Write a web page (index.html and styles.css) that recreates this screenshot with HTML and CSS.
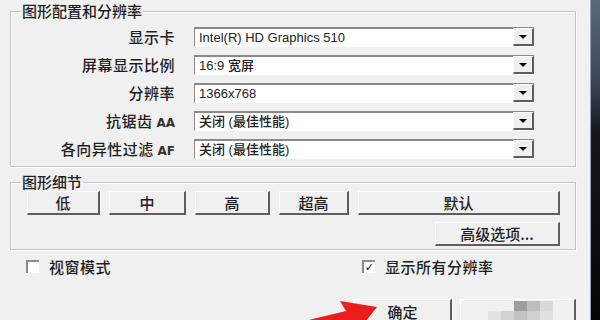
FILE: index.html
```html
<!DOCTYPE html>
<html lang="zh-CN">
<head>
    <meta charset="UTF-8">
    <meta name="viewport" content="width=device-width, initial-scale=1.0">
    <title>图形配置和分辨率</title>
    <link rel="stylesheet" href="styles.css">
</head>
<body>
    <div class="screen">
        <div class="dialog">
            <fieldset class="group group-display">
                <legend>图形配置和分辨率</legend>
                <div class="form-grid">
                    <label class="field-label">显示卡</label>
                    <div class="combo"><span class="combo-value">Intel(R) HD Graphics 510</span><span class="combo-btn"></span></div>

                    <label class="field-label">屏幕显示比例</label>
                    <div class="combo"><span class="combo-value">16:9 宽屏</span><span class="combo-btn"></span></div>

                    <label class="field-label">分辨率</label>
                    <div class="combo"><span class="combo-value">1366x768</span><span class="combo-btn"></span></div>

                    <label class="field-label">抗锯齿 <span class="latin">AA</span></label>
                    <div class="combo"><span class="combo-value">关闭 (最佳性能)</span><span class="combo-btn"></span></div>

                    <label class="field-label">各向异性过滤 <span class="latin">AF</span></label>
                    <div class="combo"><span class="combo-value">关闭 (最佳性能)</span><span class="combo-btn"></span></div>
                </div>
            </fieldset>

            <fieldset class="group group-detail">
                <legend>图形细节</legend>
                <div class="preset-row">
                    <button class="btn btn-low">低</button>
                    <button class="btn btn-mid">中</button>
                    <button class="btn btn-high">高</button>
                    <button class="btn btn-ultra">超高</button>
                    <button class="btn btn-default">默认</button>
                </div>
                <div class="advanced-row">
                    <button class="btn btn-advanced">高级选项...</button>
                </div>
            </fieldset>

            <div class="check-row">
                <label class="check"><span class="check-box"></span>视窗模式</label>
                <label class="check"><span class="check-box is-checked">✓</span>显示所有分辨率</label>
            </div>

            <div class="action-row">
                <button class="btn btn-ok">确定</button>
                <button class="btn btn-cancel">
                    <svg class="mosaic" width="68" height="20" viewBox="0 0 68 20">
                        <rect x="26" y="0" width="13" height="10" fill="#9c9c9c"/>
                        <rect x="39" y="0" width="13" height="10" fill="#bdbdbd"/>
                        <rect x="52" y="0" width="13" height="10" fill="#d9d9d9"/>
                        <rect x="0" y="10" width="13" height="10" fill="#e2e2e2"/>
                        <rect x="13" y="10" width="13" height="10" fill="#d2d2d2"/>
                        <rect x="26" y="10" width="13" height="10" fill="#c2c2c2"/>
                        <rect x="39" y="10" width="13" height="10" fill="#cfcfcf"/>
                        <rect x="52" y="10" width="13" height="10" fill="#e0e0e0"/>
                    </svg>
                </button>
            </div>

            <svg class="arrow" width="590" height="320" viewBox="0 0 590 320">
                <polygon points="377,307 340,301 346,311 292,324 298,340 352,328 354,336" fill="#ea1c1c"/>
            </svg>
        </div>
        <div class="edge"></div>
    </div>
</body>
</html>
```

FILE: styles.css
```css
* {
    margin: 0;
    padding: 0;
    box-sizing: border-box;
}

body {
    background-color: #f0f0f0;
    font-family: "Noto Sans CJK SC", sans-serif;
    font-size: 15px;
    font-weight: 500;
    color: #1e1e1e;
}

.screen {
    width: 600px;
    height: 320px;
    display: flex;
    overflow: hidden;
}

.dialog {
    width: 590px;
    height: 320px;
    padding: 2px 14px 0 10px;
    position: relative;
    background-color: #f0f0f0;
}

.edge {
    width: 10px;
    height: 320px;
    background: linear-gradient(to bottom, #5a6a7c 0%, #3c4756 25%, #14171b 42%, #050505 100%);
    border-left: 1px solid #9aa0a8;
}

/* group boxes */
.group {
    min-width: 0;
    border: 1px solid #c4c4c4;
    box-shadow: inset 1px 1px 0 #fff, 1px 1px 0 #fff;
}

.group legend {
    padding: 0 1px;
    line-height: 18px;
    font-size: 15px;
}

.group-display {
    padding: 7px 10px 7px 10px;
}

.form-grid {
    display: grid;
    grid-template-columns: 154px 340px;
    column-gap: 19px;
    row-gap: 8px;
}

.field-label {
    height: 20px;
    line-height: 20px;
    text-align: right;
    white-space: nowrap;
    letter-spacing: 0.5px;
}

.field-label .latin {
    font-family: "DejaVu Sans", sans-serif;
    font-size: 12px;
    font-weight: bold;
    letter-spacing: 0;
    color: #333;
}

.combo {
    height: 20px;
    display: flex;
    background-color: #fff;
    border-top: 2px solid #8a8a8a;
    border-left: 1px solid #8a8a8a;
    border-bottom: 1px solid #fdfdfd;
}

.combo-value {
    flex: 1;
    padding-left: 4px;
    line-height: 17px;
    font-family: "Liberation Sans", "Noto Sans CJK SC", sans-serif;
    font-size: 13px;
    color: #222;
    white-space: nowrap;
}

.combo-btn {
    width: 21px;
    height: 18px;
    margin-top: -1px;
    display: flex;
    align-items: center;
    justify-content: center;
    background-color: #f0f0f0;
    border-top: 1px solid #fff;
    border-left: 1px solid #fff;
    border-right: 2px solid #5c5c5c;
    border-bottom: 2px solid #5c5c5c;
}

.combo-btn:after {
    content: '';
    width: 0;
    height: 0;
    border-left: 4px solid transparent;
    border-right: 4px solid transparent;
    border-top: 4px solid #000;
}

.group-detail {
    margin-top: 6px;
    padding: 0 10px 3px 10px;
}

/* buttons */
.btn {
    height: 24px;
    font-family: "Noto Sans CJK SC", sans-serif;
    font-size: 15px;
    font-weight: 500;
    line-height: 20px;
    color: #1e1e1e;
    background-color: #f0f0f0;
    border-top: 1px solid #fdfdfd;
    border-left: 1px solid #fdfdfd;
    border-right: 2px solid #5e5e5e;
    border-bottom: 2px solid #5e5e5e;
}

.preset-row {
    margin-left: 6px;
    display: flex;
    gap: 9px;
}

.btn-low { width: 73px; }
.btn-mid { width: 77px; }
.btn-high { width: 75px; }
.btn-ultra { width: 70px; }
.btn-default { width: 202px; }

.advanced-row {
    width: 539px;
    margin-top: 7px;
    display: flex;
    justify-content: flex-end;
}

.btn-advanced {
    width: 125px;
}

/* check boxes */
.check-row {
    margin-top: 8px;
    padding-left: 16px;
    display: grid;
    grid-template-columns: 336px auto;
}

.check {
    height: 17px;
    display: flex;
    align-items: center;
    gap: 10px;
    line-height: 17px;
    letter-spacing: 0.5px;
}

.check-box {
    width: 13px;
    height: 13px;
    display: flex;
    align-items: center;
    justify-content: center;
    font-family: "DejaVu Sans", sans-serif;
    font-size: 11px;
    font-weight: bold;
    line-height: 1;
    color: #111;
    background-color: #fff;
    border-top: 2px solid #8a8a8a;
    border-left: 2px solid #8a8a8a;
}

/* bottom buttons */
.action-row {
    margin-top: 24px;
    display: flex;
    justify-content: flex-end;
    gap: 8px;
}

.btn-ok {
    width: 98px;
    height: 28px;
    padding-bottom: 4px;
    border-bottom: none;
}

.btn-cancel {
    width: 116px;
    height: 28px;
    padding-top: 1px;
    display: flex;
    justify-content: center;
    align-items: flex-start;
    border-bottom: none;
}

.mosaic {
    display: block;
    margin-left: 8px;
}

.arrow {
    position: absolute;
    top: 0;
    left: 0;
    pointer-events: none;
}
```
